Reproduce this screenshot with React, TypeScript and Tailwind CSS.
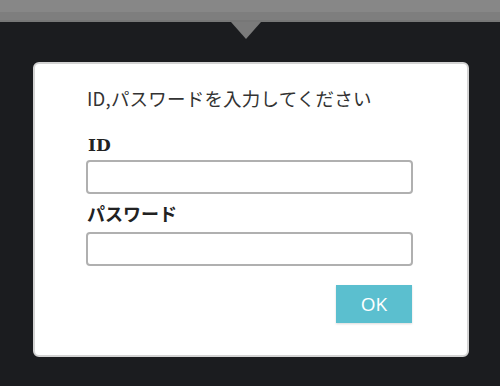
import React from "react";

export default function App() {
  return (
    <div className="w-[500px] h-[386px] bg-[#1b1c1f] overflow-hidden flex flex-col" style={{ fontFamily: '"Noto Sans CJK JP", "Noto Sans", sans-serif' }}>
      <div className="h-[22px] flex flex-col">
        <div className="h-[12px] bg-[#878787]" />
        <div className="h-[8px] bg-[#7e7e7e]" />
        <div className="h-[2px] bg-[#777777]" />
      </div>
      <div className="flex justify-center">
        <div className="ml-[-8px] w-0 h-0 border-l-[15px] border-r-[15px] border-t-[17px] border-l-transparent border-r-transparent border-t-[#7b7b7b]" />
      </div>
      <div className="mt-[23px] ml-[33px] w-[436px] h-[295px] bg-white border-2 border-[#d3d3d3] rounded-[6px] flex flex-col pt-[22px] pl-[51px] pr-[54px]">
        <p className="h-[24px] leading-[24px] text-[18.5px] text-[#333333] pl-[1px] m-0 tracking-[0.2px]">ID,パスワードを入力してください</p>
        <label className="mt-[25px] h-[20px] leading-[20px] text-[17px] font-bold text-[#222222] pl-[2px]" style={{ fontFamily: '"DejaVu Serif", "Noto Sans CJK JP", serif' }}>ID</label>
        <input className="mt-[5px] h-[34px] w-[327px] border-2 border-[#b0b0b0] rounded-[4px] bg-white outline-none" />
        <label className="mt-[9px] h-[20px] leading-[20px] text-[18px] font-bold text-[#222222] pl-[1px]">パスワード</label>
        <input type="password" className="mt-[9px] h-[34px] w-[327px] border-2 border-[#b0b0b0] rounded-[4px] bg-white outline-none" />
        <div className="mt-[19px] flex justify-end w-[327px] pr-[1px]">
          <button className="w-[76px] h-[38px] bg-[#5bbfcf] text-white text-[19px] leading-[38px] shadow-[0_1px_2px_rgba(0,0,0,0.15)]" style={{ fontFamily: '"Open Sans", "Noto Sans", sans-serif' }}>OK</button>
        </div>
      </div>
    </div>
  );
}
